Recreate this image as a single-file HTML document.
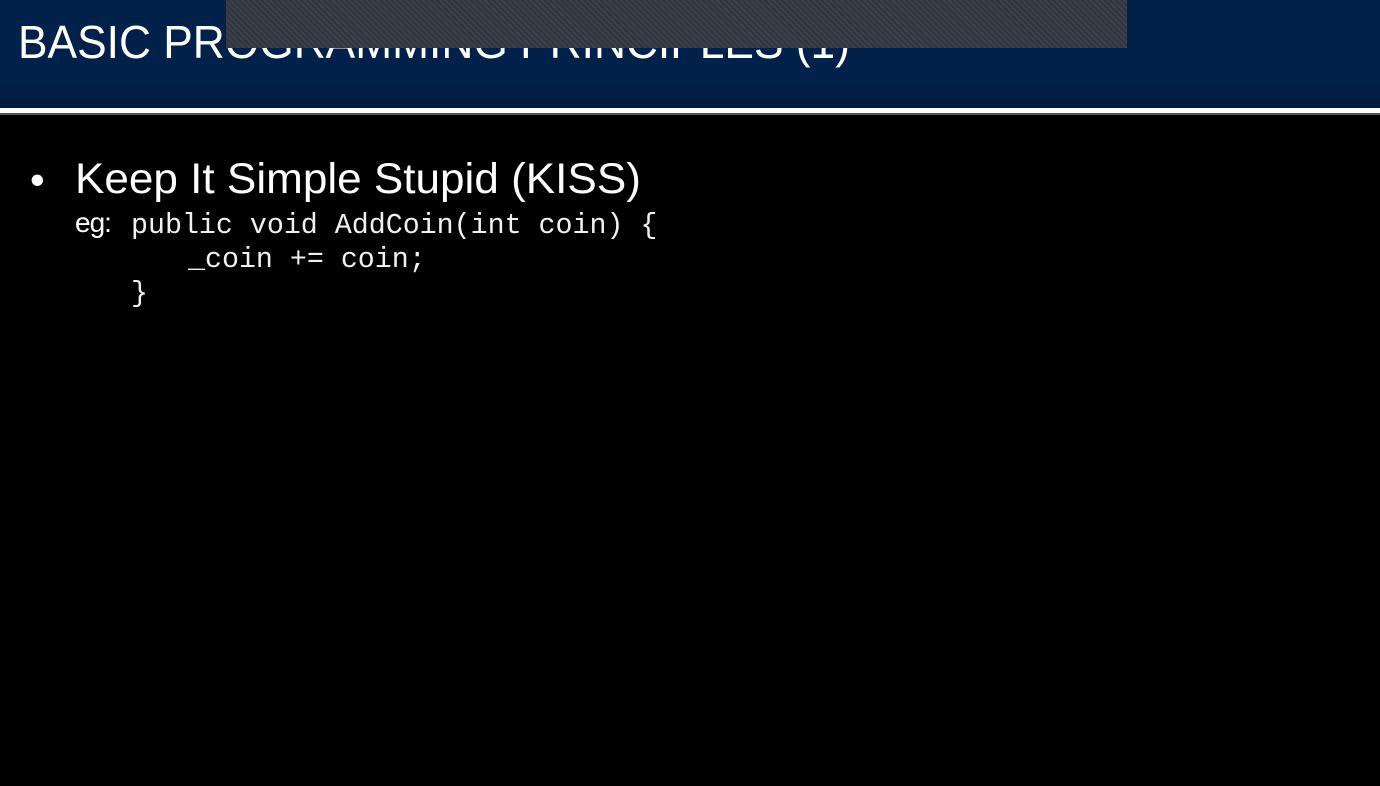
<!DOCTYPE html>
<html><head><style>
body{margin:0;width:1380px;height:786px;background:#000;overflow:hidden;position:relative;font-family:"Liberation Sans",Arial,sans-serif}
.hdr{position:absolute;left:0;top:0;width:1380px;height:108px;background:linear-gradient(#01214b 0,#01214b 80px,#011a3a 108px)}
.line{position:absolute;left:0;top:108px;width:1380px;height:5px;background:#fff}
.line2{position:absolute;left:0;top:113px;width:1380px;height:2px;background:#555}
.title{position:absolute;left:18px;top:15px;font-size:46px;color:#fff;white-space:nowrap;transform-origin:0 0;transform:scaleX(0.963);line-height:54px}
.hatch{position:absolute;left:226px;top:0;width:901px;height:48px;background:repeating-linear-gradient(45deg,#3c404a 0,#3c404a 2px,#30343d 2px,#30343d 4px)}
.t{position:absolute;color:#fff;white-space:nowrap}
.code{font-family:"Liberation Mono","Courier New",monospace;font-size:28.3px;color:#f0f0f0}
</style></head><body>
<div class="hdr"></div>
<div class="title">BASIC PROGRAMMING PRINCIPLES (1)</div>
<div class="hatch"></div>
<div class="line"></div><div class="line2"></div>
<div class="t" style="left:30px;top:156px;font-size:42px;line-height:48px">•</div>
<div class="t" style="left:75px;top:154px;font-size:43px;line-height:50px;transform-origin:0 0;transform:scaleX(1.025)">Keep It Simple Stupid (KISS)</div>
<div class="t" style="left:75px;top:207px;font-size:28px;line-height:32px;letter-spacing:-1px">eg:</div>
<div class="t code" style="left:131px;top:209px;line-height:34px">public void AddCoin(int coin) {<br><span style="padding-left:57px">_coin += coin;</span><br>}</div>
</body></html>
